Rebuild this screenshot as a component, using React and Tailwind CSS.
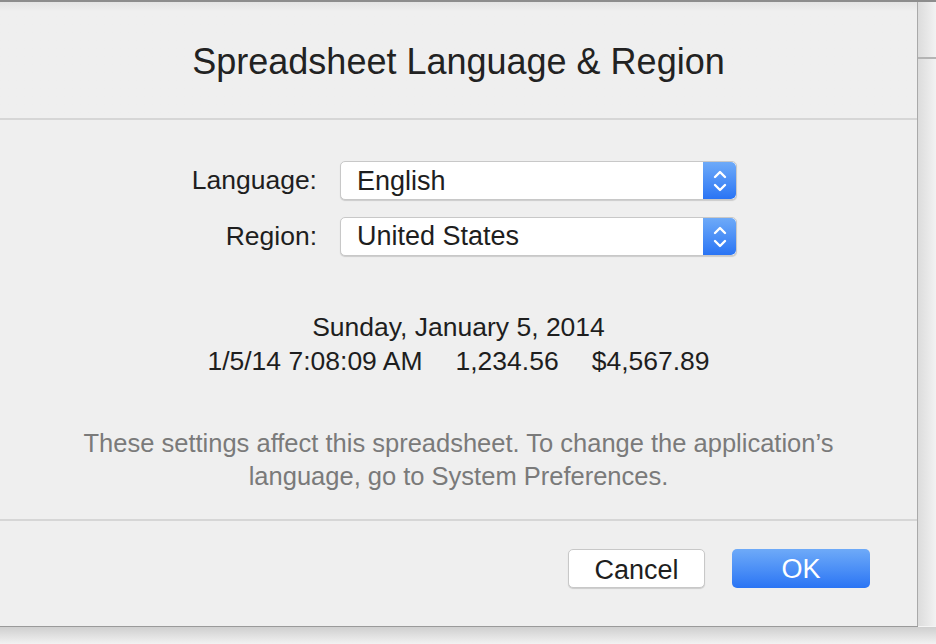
import React from 'react';

const Stepper = () => (
    <div className="w-[33px] h-full rounded-r-[5px] bg-gradient-to-b from-[#6eaaf8] to-[#2a74f4] flex items-center justify-center">
        <svg width="16" height="26" viewBox="0 0 16 26" fill="none" stroke="white" strokeWidth="2.4" strokeLinecap="round" strokeLinejoin="round">
            <path d="M3 9 L8 4 L13 9" />
            <path d="M3 17 L8 22 L13 17" />
        </svg>
    </div>
);

const Popup = ({ value }) => (
    <div className="flex w-[397px] h-[39px] bg-white rounded-[5px] border border-[#c8c8c8] shadow-[0_1px_1px_rgba(0,0,0,0.15)] overflow-hidden">
        <div className="flex-1 flex items-center pl-[16px] text-[27px] text-[#1e1e1e]">{value}</div>
        <Stepper />
    </div>
);

const Row = ({ label, value }) => (
    <div className="flex items-center">
        <div className="w-[340px] pr-[23px] text-right text-[26.5px] text-[#1e1e1e]">{label}</div>
        <Popup value={value} />
    </div>
);

export default function App() {
    return (
        <div className="w-[936px] h-[644px] overflow-hidden bg-[#f4f4f4] font-['Liberation_Sans',Arial,sans-serif] flex flex-col">
            <div className="h-[2px] bg-[#8d8d8d]" />
            <div className="flex h-[624px]">
                <div className="w-[918px] bg-[#efefef] border-r border-[#a9a9a9] flex flex-col">
                    <div className="h-[116px] flex items-center justify-center bg-gradient-to-b from-[#e4e4e4] to-[#efefef] to-[8%]">
                        <h1 className="text-[36px] text-[#222] pt-[4px]">Spreadsheet Language &amp; Region</h1>
                    </div>
                    <div className="h-[2px] bg-[#d6d6d6]" />
                    <div className="flex flex-col pt-[41px] gap-[16px]">
                        <Row label="Language:" value="English" />
                        <Row label="Region:" value="United States" />
                    </div>
                    <div className="flex flex-col items-center mt-[53px] text-[26.5px] text-[#1e1e1e] leading-[34px]">
                        <div>Sunday, January 5, 2014</div>
                        <div className="flex gap-[33px]">
                            <span>1/5/14 7:08:09 AM</span>
                            <span>1,234.56</span>
                            <span>$4,567.89</span>
                        </div>
                    </div>
                    <div className="mt-[49px] text-center text-[25.5px] text-[#7a7a7a] leading-[33px]">
                        These settings affect this spreadsheet. To change the application’s
                        <br />
                        language, go to System Preferences.
                    </div>
                    <div className="mt-[26px] h-[2px] bg-[#d6d6d6]" />
                    <div className="flex justify-end gap-[27px] pr-[47px] pt-[28px]">
                        <button className="w-[137px] h-[39px] bg-white rounded-[5px] border border-[#c8c8c8] shadow-[0_1px_1px_rgba(0,0,0,0.15)] text-[27px] text-[#1e1e1e]">
                            Cancel
                        </button>
                        <button className="w-[138px] h-[39px] rounded-[5px] bg-gradient-to-b from-[#6eaaf8] to-[#2a74f4] text-[27px] text-white">
                            OK
                        </button>
                    </div>
                </div>
                <div className="flex-1 flex flex-col bg-gradient-to-r from-[#dcdcdc] to-[#f2f2f2]">
                    <div className="h-[55px]" />
                    <div className="h-[2px] bg-[#b4b4b4]" />
                </div>
            </div>
            <div className="h-[1px] bg-[#9a9a9a] w-[918px]" />
            <div className="flex-1 bg-gradient-to-b from-[#cfcfcf] to-[#f2f2f2]" />
        </div>
    );
}
